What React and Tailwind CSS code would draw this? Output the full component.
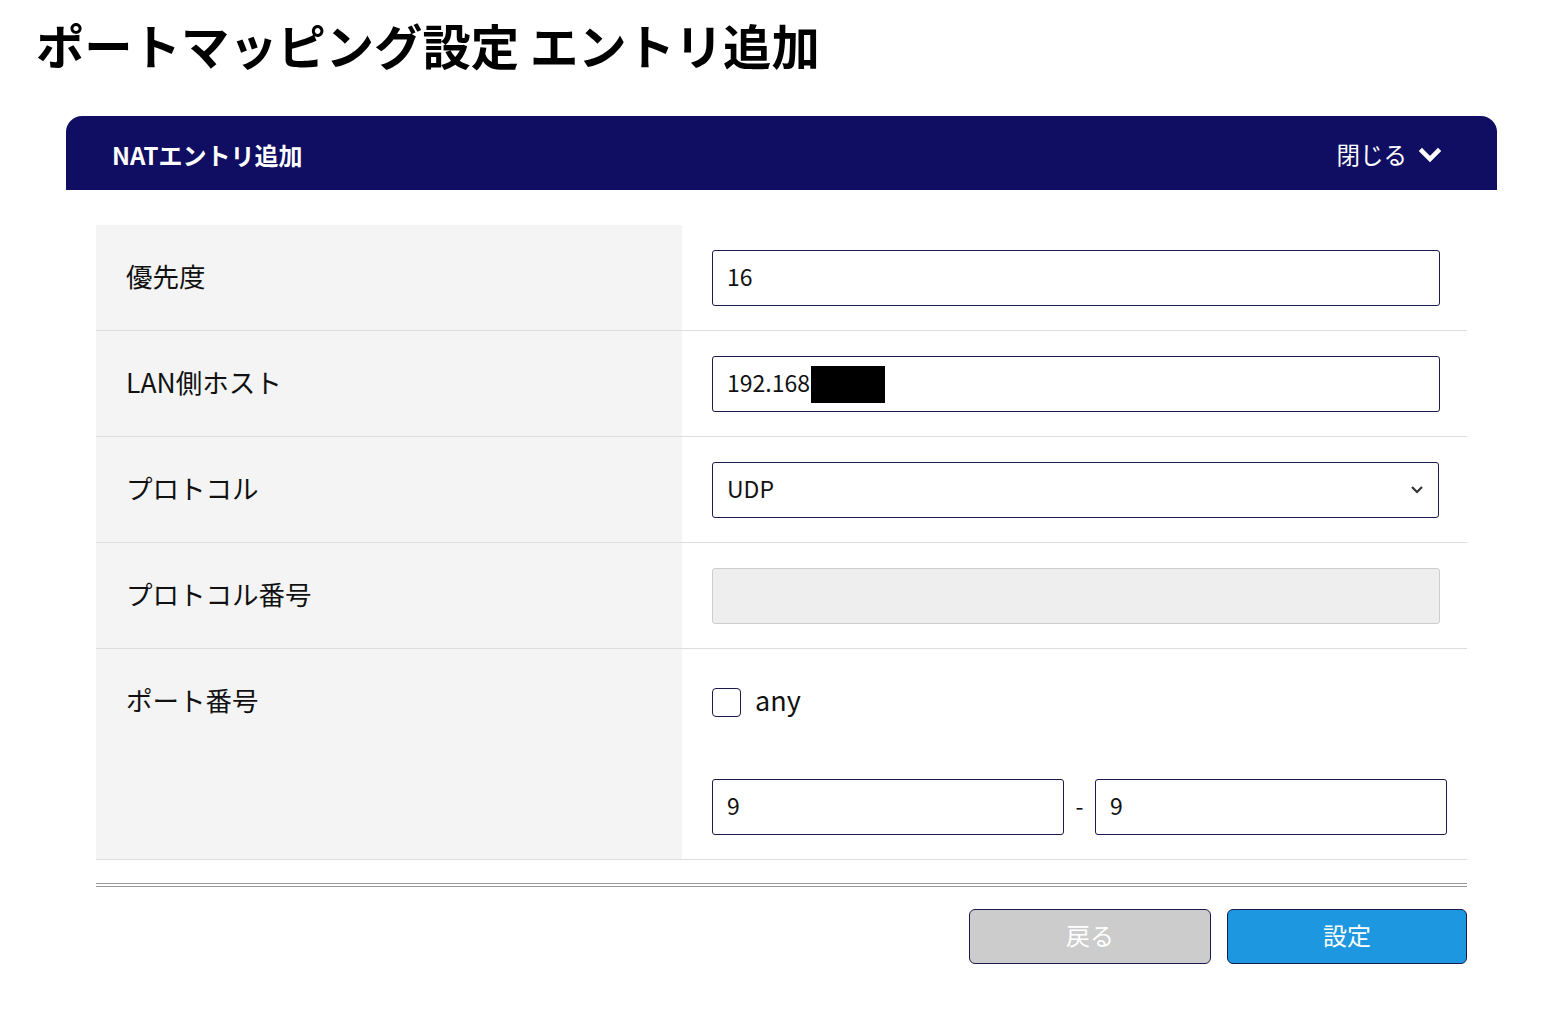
import React from "react";

const font = { fontFamily: '"Noto Sans CJK JP", "Noto Sans", sans-serif' };

function Row({ label, children }) {
  return (
    <div className="flex border-b border-[#dddddd]">
      <div className="w-[586px] shrink-0 bg-[#f4f4f4] pl-[30px] pt-[33px] text-[26.5px] leading-[36px] text-[#111]">
        {label}
      </div>
      <div className="flex-1 pl-[30px] pr-[27px] pt-[25px] pb-[24px]">{children}</div>
    </div>
  );
}

function TextBox({ value, children }) {
  return (
    <div className="flex h-[56px] items-center rounded-[3px] border border-[#1b1a4d] bg-white pb-[3px] pl-[14px] text-[23px] text-[#111]">
      {value}
      {children}
    </div>
  );
}

export default function App() {
  return (
    <div className="min-h-[1015px] w-[1562px] bg-white" style={font}>
      <h1 className="pl-[36px] pt-[10px] text-[48.3px] font-bold leading-[68px] text-black">
        ポートマッピング設定 エントリ追加
      </h1>
      <div className="ml-[66px] mr-[65px] mt-[38px]">
        <div className="flex h-[74px] items-center justify-between rounded-t-[16px] bg-[#100e62] pl-[46px] pr-[56px] pt-[3px] text-white">
          <span className="text-[24px] font-bold">NATエントリ追加</span>
          <span className="flex items-center gap-[12px] text-[23.5px]">
            閉じる
            <svg width="22" height="16" viewBox="0 0 22 16">
              <path d="M3 4 L11 12 L19 4" fill="none" stroke="white" strokeWidth="4.5" strokeLinecap="square" />
            </svg>
          </span>
        </div>
        <div className="px-[30px] pt-[35px]">
          <Row label="優先度">
            <TextBox value="16" />
          </Row>
          <Row label="LAN側ホスト">
            <TextBox value="192.168">
              <span className="ml-[1px] mt-[3px] inline-block h-[37px] w-[74px] bg-black" />
            </TextBox>
          </Row>
          <Row label="プロトコル">
            <div className="mr-[1px] flex h-[56px] items-center justify-between rounded-[3px] border border-[#1b1a4d] bg-white pl-[14px] pr-[14px] text-[23px] text-[#111]">
              <span className="pb-[3px]">UDP</span>
              <svg width="14" height="10" viewBox="0 0 14 10">
                <path d="M2 2 L7 7 L12 2" fill="none" stroke="#333" strokeWidth="2.2" />
              </svg>
            </div>
          </Row>
          <Row label="プロトコル番号">
            <div className="h-[56px] rounded-[3px] border border-[#cccccc] bg-[#eeeeee]" />
          </Row>
          <div className="flex border-b border-[#dddddd]">
            <div className="w-[586px] shrink-0 bg-[#f4f4f4] pl-[30px] pt-[33px] text-[26.5px] leading-[36px] text-[#111]">
              ポート番号
            </div>
            <div className="flex-1 pl-[30px] pr-[20px] pt-[25px] pb-[24px]">
              <div className="flex h-[56px] items-center gap-[14px]">
                <span className="inline-block h-[29px] w-[29px] rounded-[4px] border border-[#1b1a4d] bg-white" />
                <span className="pb-[3px] text-[27px] text-[#111]">any</span>
              </div>
              <div className="mt-[49px] flex items-center">
                <div className="w-[352px]">
                  <TextBox value="9" />
                </div>
                <span className="w-[31px] pb-[3px] text-center text-[23px] text-[#111]">-</span>
                <div className="w-[352px]">
                  <TextBox value="9" />
                </div>
              </div>
            </div>
          </div>
          <div className="mt-[23px] h-[4px] border-y border-[#999999]" />
          <div className="mt-[22px] flex justify-end gap-[16px]">
            <button className="h-[55px] w-[242px] rounded-[6px] border border-[#1b1a4d] bg-[#cccccc] pb-[4px] text-[24px] text-white">
              戻る
            </button>
            <button className="h-[55px] w-[240px] rounded-[6px] border border-[#1b1a4d] bg-[#1e97e1] pb-[4px] text-[24px] text-white">
              設定
            </button>
          </div>
        </div>
      </div>
    </div>
  );
}
